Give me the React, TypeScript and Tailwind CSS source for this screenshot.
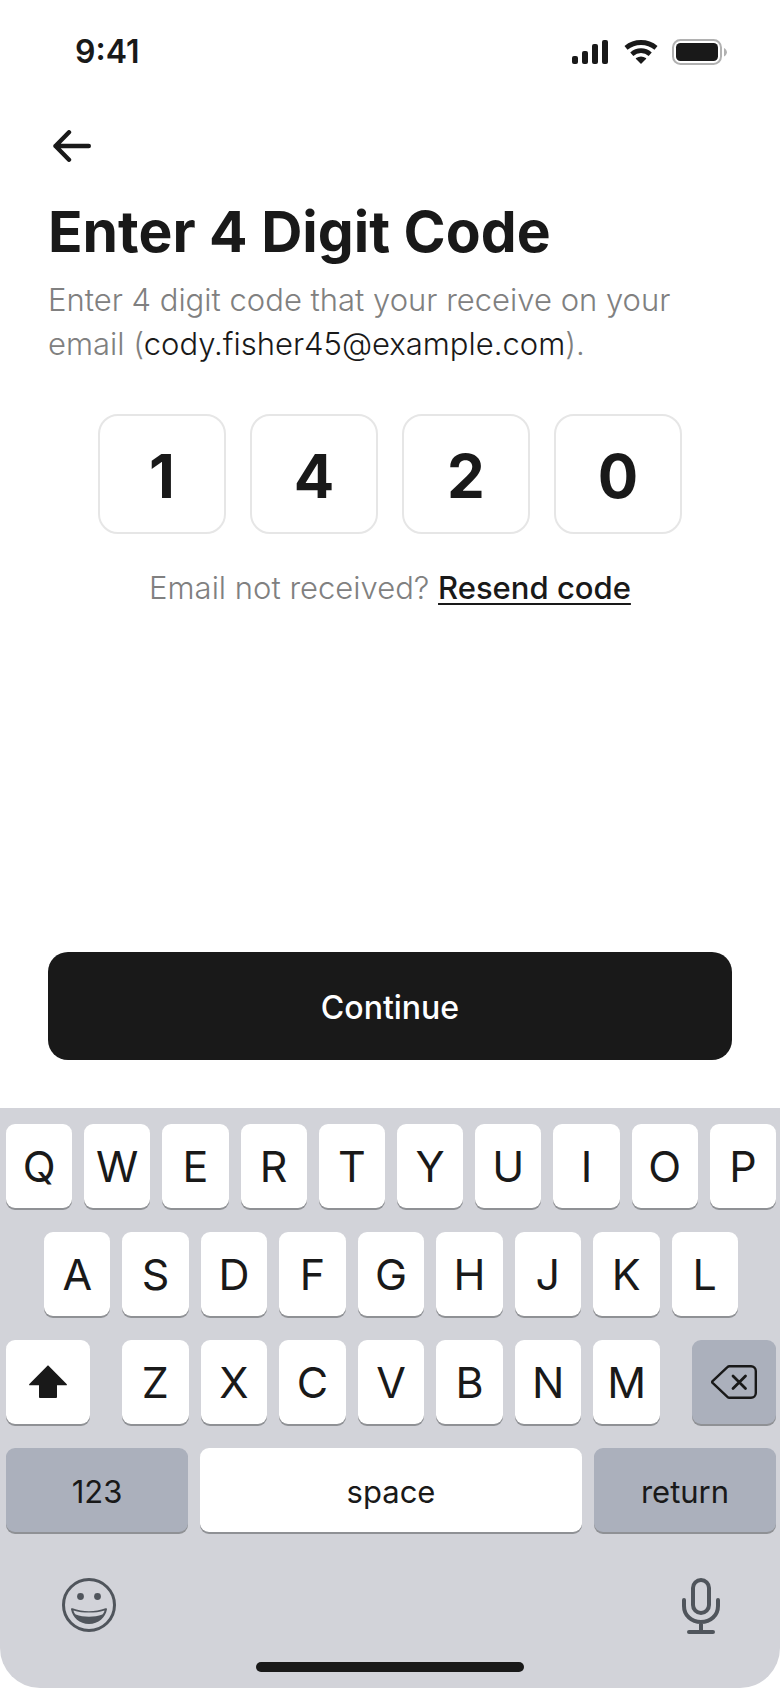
import { useState } from "react";

function StatusBar() {
  return (
    <div className="flex h-[104px] items-center justify-between pl-[75px] pr-[53px]">
      <time className="text-[32px] leading-10 font-semibold">9:41</time>
      <div className="flex items-center">
        <svg className="h-6 w-9" viewBox="0 0 36 24" fill="currentColor" aria-hidden="true">
          <rect x="0" y="16" width="6" height="8" rx="2" />
          <rect x="10" y="11" width="6" height="13" rx="2" />
          <rect x="20" y="4" width="6" height="20" rx="2" />
          <rect x="30" y="0" width="6" height="24" rx="2" />
        </svg>
        <svg className="ml-4 h-6 w-[34px]" viewBox="0 0 34 24" fill="none" stroke="currentColor" aria-hidden="true">
          <path d="M2 7.800Q8.500 2.500 17 2.500T32 7.800" strokeWidth="4.800" />
          <path d="M7.800 14.200Q11.800 10.600 17 10.600T26.200 14.200" strokeWidth="4.600" />
          <path d="M12.500 18.600Q17 15.800 21.500 18.600L17 23Z" fill="currentColor" strokeWidth="1.400" strokeLinejoin="round" />
        </svg>
        <svg className="ml-3.5 h-[26px] w-[55px]" viewBox="0 0 55 26" aria-hidden="true">
          <rect x="1" y="1" width="48" height="24" rx="7.500" fill="none" stroke="#b1b1b1" strokeWidth="2" />
          <rect x="4" y="4" width="42" height="18" rx="4.500" fill="#191919" />
          <path d="M52 9v8.500c1.700-.7 2.900-2.300 2.900-4.200S53.700 9.700 52 9Z" fill="#b1b1b1" />
        </svg>
      </div>
    </div>
  );
}

const digitNames = ["First digit", "Second digit", "Third digit", "Fourth digit"];

function CodeInputs() {
  const [code, setCode] = useState(["1", "4", "2", "0"]);
  return (
    <div className="mt-12 flex justify-center gap-6">
      {code.map((digit, index) => (
        <input
          key={index}
          aria-label={digitNames[index]}
          inputMode="numeric"
          maxLength={1}
          value={digit}
          onChange={(e) => setCode(code.map((d, i) => (i === index ? e.target.value : d)))}
          className="h-[120px] w-32 min-w-0 rounded-[20px] border-2 border-[#e6e6e6] bg-white pt-1 text-center text-[60px] font-bold outline-none"
        />
      ))}
    </div>
  );
}

const keyBase = "flex h-[84px] items-center justify-center rounded-[9px]";
const whiteKey = `${keyBase} bg-white shadow-[0_2px_0_#8f9195]`;
const grayKey = `${keyBase} bg-[#abb0bc] shadow-[0_2px_0_#8f9195]`;

function Letters({ letters }: { letters: string }) {
  return (
    <>
      {letters.split("").map((letter) => (
        <button key={letter} type="button" className={`${whiteKey} min-w-0 flex-1 text-[43px]`}>
          {letter}
        </button>
      ))}
    </>
  );
}

function Keyboard() {
  return (
    <section aria-label="Keyboard" className="rounded-b-[40px] bg-[#d2d3d9] pt-4 pb-4">
      <div className="flex flex-col gap-6 pr-1 pl-1.5">
        <div className="flex gap-3">
          <Letters letters="QWERTYUIOP" />
        </div>
        <div className="flex gap-3 px-[38px]">
          <Letters letters="ASDFGHJKL" />
        </div>
        <div className="flex gap-8">
          <button type="button" aria-label="Shift" className={`${whiteKey} w-[84px]`}>
            <svg className="h-[34px] w-[38px]" viewBox="0 0 38 34" fill="currentColor" aria-hidden="true">
              <path d="M18.200.9c.5-.5 1.100-.5 1.600 0L37.600 19c.6.7.4 1.300-.5 1.300H28v11.500c0 .8-.4 1.200-1.200 1.200H11.200c-.8 0-1.200-.4-1.200-1.200V20.300H.9c-.9 0-1.100-.6-.5-1.300Z" />
            </svg>
          </button>
          <div className="flex min-w-0 flex-1 gap-3">
            <Letters letters="ZXCVBNM" />
          </div>
          <button type="button" aria-label="Delete" className={`${grayKey} w-[84px]`}>
            <svg className="h-[34px] w-[46px]" viewBox="0 0 46 34" fill="none" stroke="currentColor" strokeWidth="2.400" strokeLinecap="round" strokeLinejoin="round" aria-hidden="true">
              <path d="M18.500 1.200H40a4.800 4.800 0 0 1 4.800 4.800v22a4.800 4.800 0 0 1-4.800 4.800H18.500c-.8 0-1.500-.3-2.100-.9L1.600 17.900c-.6-.6-.6-1.200 0-1.800L16.400 2.100c.6-.6 1.300-.9 2.100-.9Z" />
              <path d="m22 11 12.500 12.500M34.500 11 22 23.500" strokeWidth="2.800" />
            </svg>
          </button>
        </div>
        <div className="flex gap-3">
          <button type="button" className={`${grayKey} w-[182px] pt-1 text-[31px]`}>123</button>
          <button type="button" className={`${whiteKey} flex-1 pt-1 text-[31px]`}>space</button>
          <button type="button" className={`${grayKey} w-[182px] pt-1 text-[31px]`}>return</button>
        </div>
      </div>
      <div className="mt-[46px] flex items-start justify-between pr-[60px] pl-[62px] text-[#50555c]">
        <button type="button" aria-label="Emoji">
          <svg className="h-[54px] w-[54px]" viewBox="0 0 54 54" fill="none" aria-hidden="true">
            <circle cx="27" cy="27" r="25.500" stroke="currentColor" strokeWidth="3" />
            <circle cx="18.500" cy="18.500" r="3.400" fill="currentColor" />
            <circle cx="35.500" cy="18.500" r="3.400" fill="currentColor" />
            <path d="M10.500 30.300c10.500 4 22.500 4 33 0 .9-.3 1.600.2 1.500 1C43.500 39.500 36.500 46 27 46S10.500 39.500 9 31.300c-.1-.8.600-1.300 1.500-1Z" fill="currentColor" />
            <path d="M11.500 32.400c9.800 2.900 21.200 2.900 31 0-.3 1.600-1.100 3.200-2.200 4.200-8 3-18.600 3-26.600 0-1.100-1-1.900-2.600-2.200-4.200Z" fill="#d2d3d9" />
          </svg>
        </button>
        <button type="button" aria-label="Dictate">
          <svg className="h-14 w-[38px]" viewBox="0 0 38 56" fill="none" stroke="currentColor" strokeWidth="4" strokeLinecap="round" aria-hidden="true">
            <rect x="11" y="2" width="16" height="33" rx="8" />
            <path d="M2 22v6c0 9.500 7.500 16 17 16s17-6.500 17-16v-6M19 44v10M7 54h24" />
          </svg>
        </button>
      </div>
      <div className="mx-auto mt-7 h-2.5 w-[268px] rounded-full bg-[#191919]" />
    </section>
  );
}

export default function App() {
  return (
    <div className="flex min-h-screen flex-col bg-white font-[Inter,sans-serif] text-[#191919]">
      <StatusBar />
      <main className="flex flex-1 flex-col px-12">
        <button type="button" aria-label="Back" className="mt-[18px] flex h-12 w-12 items-center justify-center">
          <svg className="h-8 w-[38px]" viewBox="0 0 38 32" fill="none" stroke="currentColor" strokeWidth="4.400" strokeLinecap="round" strokeLinejoin="round" aria-hidden="true">
            <path d="M35.800 16H2.500M16 2.300 2.500 16 16 29.700" />
          </svg>
        </button>
        <h1 className="mt-6 text-[57px] leading-[76px] font-bold">Enter 4 Digit Code</h1>
        <p className="mt-2 text-[31px] leading-[44px] font-light text-[#808080]">
          Enter 4 digit code that your receive on your email (
          <span className="text-[#191919]">cody.fisher45@example.com</span>).
        </p>
        <CodeInputs />
        <p className="mt-8 text-center text-[31px] leading-[44px] font-light text-[#808080]">
          Email not received?{" "}
          <a href="#resend" className="font-medium text-[#191919] underline decoration-2 underline-offset-4">
            Resend code
          </a>
        </p>
        <button type="button" className="mt-auto mb-12 h-[108px] rounded-[20px] bg-[#191919] pt-1 text-[32px] font-medium text-white">
          Continue
        </button>
      </main>
      <Keyboard />
    </div>
  );
}
